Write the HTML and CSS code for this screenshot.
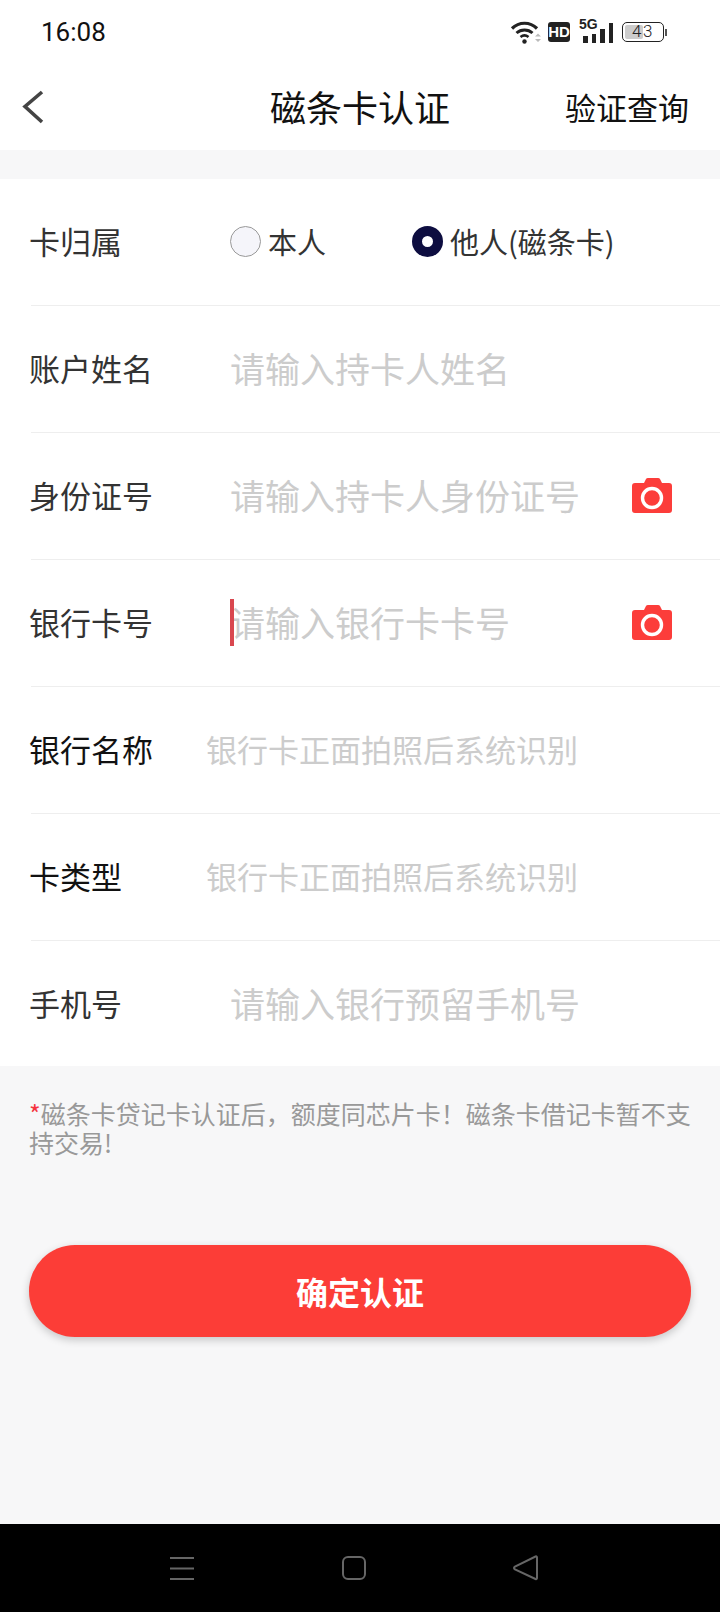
FILE: index.html
```html
<!DOCTYPE html>
<html lang="zh-CN">
<head>
  <meta charset="UTF-8">
  <title>磁条卡认证</title>
  <link rel="stylesheet" href="styles.css">
</head>
<body>
  <!-- Status bar -->
  <div class="status-bar">
    <span class="time">16:08</span>
    <div class="status-icons">
      <svg class="wifi" width="31" height="24" viewBox="0 0 31 24">
        <path d="M2 8.500C9 1.500 20 1.500 27 8.500" fill="none" stroke="#222" stroke-width="3.200"/>
        <path d="M6.500 13C11 9 18 9 22.500 13" fill="none" stroke="#222" stroke-width="3"/>
        <path d="M10.500 17C13 15 16 15 18.500 17" fill="none" stroke="#222" stroke-width="2.600"/>
        <circle cx="14.500" cy="21.500" r="2.200" fill="#222"/>
        <path d="M25 16.500h6l-3-3zM25 19h6l-3 3z" fill="#bbb"/>
      </svg>
      <span class="hd">HD</span>
      <div class="signal">
        <span class="five-g">5G</span>
        <div class="bars">
          <i class="bar bar-1"></i>
          <i class="bar bar-2"></i>
          <i class="bar bar-3"></i>
          <i class="bar bar-4"></i>
        </div>
      </div>
      <div class="battery">
        <div class="battery-body">
          <div class="battery-fill"></div>
          <span class="battery-num">43</span>
        </div>
        <div class="battery-nub"></div>
      </div>
    </div>
  </div>

  <!-- Title bar -->
  <div class="nav-bar">
    <svg class="back" width="24" height="36" viewBox="0 0 24 36">
      <path d="M20 3L3 17.500L20 33" fill="none" stroke="#444" stroke-width="3.600"/>
    </svg>
    <h1 class="nav-title">磁条卡认证</h1>
    <span class="nav-action">验证查询</span>
  </div>

  <div class="page">
    <div class="form">
      <div class="row">
        <label class="row-label">卡归属</label>
        <div class="radios">
          <div class="radio-item radio-self">
            <span class="radio"></span>
            <span>本人</span>
          </div>
          <div class="radio-item">
            <span class="radio radio-on"></span>
            <span>他人(磁条卡)</span>
          </div>
        </div>
      </div>
      <div class="row">
        <label class="row-label">账户姓名</label>
        <span class="placeholder">请输入持卡人姓名</span>
      </div>
      <div class="row">
        <label class="row-label">身份证号</label>
        <span class="placeholder">请输入持卡人身份证号</span>
        <svg class="camera" width="40" height="35" viewBox="0 0 40 35">
          <path d="M3 5h9l2-4q.5-1 2-1h10q1.500 0 2 1l2 4h7q3 0 3 3v24q0 3-3 3H3q-3 0-3-3V8q0-3 3-3z" fill="#fc3d3a"/>
          <circle cx="20" cy="20" r="9.500" fill="none" stroke="#fff" stroke-width="3.400"/>
        </svg>
      </div>
      <div class="row">
        <label class="row-label">银行卡号</label>
        <span class="caret"></span>
        <span class="placeholder">请输入银行卡卡号</span>
        <svg class="camera" width="40" height="35" viewBox="0 0 40 35">
          <path d="M3 5h9l2-4q.5-1 2-1h10q1.500 0 2 1l2 4h7q3 0 3 3v24q0 3-3 3H3q-3 0-3-3V8q0-3 3-3z" fill="#fc3d3a"/>
          <circle cx="20" cy="20" r="9.500" fill="none" stroke="#fff" stroke-width="3.400"/>
        </svg>
      </div>
      <div class="row">
        <label class="row-label row-label-dark row-label-short">银行名称</label>
        <span class="hint">银行卡正面拍照后系统识别</span>
      </div>
      <div class="row">
        <label class="row-label row-label-dark row-label-short">卡类型</label>
        <span class="hint">银行卡正面拍照后系统识别</span>
      </div>
      <div class="row">
        <label class="row-label">手机号</label>
        <span class="placeholder">请输入银行预留手机号</span>
      </div>
    </div>

    <p class="note"><span class="star">*</span>磁条卡贷记卡认证后，额度同芯片卡！磁条卡借记卡暂不支持交易!</p>

    <button class="submit" type="button">确定认证</button>
  </div>

  <!-- System navigation -->
  <div class="sys-nav">
    <svg width="26" height="24" viewBox="0 0 26 24">
      <path d="M1 2h24M1 12.500h24M1 23h24" stroke="#666" stroke-width="2"/>
    </svg>
    <svg width="26" height="26" viewBox="0 0 26 26">
      <rect x="2" y="2" width="22" height="22" rx="5" fill="none" stroke="#666" stroke-width="2"/>
    </svg>
    <svg width="26" height="26" viewBox="0 0 26 26">
      <path d="M24 2.500V23q0 1.500-1.500 1L2 14.500q-2-1.500 0-3L22.500 1.500q1.500-.5 1.500 1z" fill="none" stroke="#666" stroke-width="2"/>
    </svg>
  </div>
</body>
</html>
```

FILE: styles.css
```css
* {
  box-sizing: border-box;
}

html, body {
  height: 100%;
}

body {
  margin: 0;
  display: flex;
  flex-direction: column;
  background: #f7f7f8;
  font-family: "Noto Sans CJK SC", "Noto Sans", sans-serif;
  color: #333;
}

.status-bar {
  height: 64px;
  background: #fff;
  display: flex;
  align-items: center;
  justify-content: space-between;
  padding: 0 53px 0 41px;
}

.time {
  font-family: Roboto, sans-serif;
  font-size: 26px;
  color: #111;
}

.status-icons {
  display: flex;
  align-items: center;
}

.wifi {
  margin-right: 7px;
  overflow: visible;
}

.hd {
  width: 22px;
  height: 20px;
  border-radius: 3px;
  background: #222;
  color: #fff;
  font-family: "Liberation Sans Narrow", "Liberation Sans", sans-serif;
  font-size: 15px;
  font-weight: bold;
  line-height: 20px;
  text-align: center;
  margin-right: 11px;
}

.signal {
  position: relative;
  width: 32px;
  height: 22px;
  margin-right: 9px;
  display: flex;
  align-items: flex-end;
  justify-content: flex-end;
}

.five-g {
  position: absolute;
  left: -2px;
  top: -4px;
  font-family: "Liberation Sans Narrow", "Liberation Sans", sans-serif;
  font-size: 14px;
  font-weight: bold;
  line-height: 14px;
  color: #222;
}

.bars {
  display: flex;
  align-items: flex-end;
  gap: 4px;
}

.bar {
  display: block;
  width: 4.500px;
  background: #222;
}

.bar-1 { height: 7px; }
.bar-2 { height: 9px; }
.bar-3 { height: 14px; }
.bar-4 { height: 20px; }

.battery {
  display: flex;
  align-items: center;
}

.battery-body {
  position: relative;
  width: 42px;
  height: 20px;
  border: 1.500px solid #222;
  border-radius: 5px;
  padding: 2px;
}

.battery-fill {
  width: 50%;
  height: 100%;
  background: #ccc;
  border-radius: 2px;
}

.battery-num {
  position: absolute;
  inset: 0;
  text-align: center;
  font-family: Roboto, sans-serif;
  font-size: 17px;
  font-weight: 300;
  line-height: 17px;
  letter-spacing: 1.500px;
  color: #222;
}

.battery-nub {
  width: 2px;
  height: 7px;
  margin-left: 1px;
  background: #555;
}

.nav-bar {
  height: 86px;
  background: #fff;
  display: flex;
  align-items: center;
  justify-content: space-between;
  padding: 0 31px 0 22px;
  position: relative;
}

.nav-title {
  position: absolute;
  left: 0;
  right: 0;
  margin: 0 0 2px;
  text-align: center;
  font-size: 36px;
  font-weight: normal;
  color: #111;
}

.nav-action {
  position: relative;
  margin-bottom: 2px;
  font-size: 31px;
  color: #111;
}

.page {
  flex: 1;
  padding-top: 29px;
}

.form {
  background: #fff;
  padding-left: 31px;
}

.row {
  height: 127px;
  display: flex;
  align-items: center;
  border-bottom: 1px solid #eee;
  padding: 0 48px 3px 0;
}

.row:last-child {
  height: 125px;
  border-bottom: none;
}

.row-label {
  width: 201px;
  margin-left: -2px;
  flex-shrink: 0;
  font-size: 31px;
  color: #333;
}

.row-label-dark {
  color: #111;
}

.row-label-short {
  width: 177px;
}

.radios {
  display: flex;
  font-size: 29px;
}

.radio-item {
  display: flex;
  align-items: center;
  gap: 7px;
}

.radio-self {
  width: 182px;
}

.radio {
  width: 31px;
  height: 31px;
  margin-top: 2px;
  border-radius: 50%;
  background: #f5f5fa;
  border: 1px solid #999;
}

.radio-on {
  background: #fff;
  border: 10px solid #0d0d40;
}

.placeholder {
  flex: 1;
  font-size: 35px;
  color: #ccc;
}

.hint {
  font-size: 31px;
  color: #ccc;
}

.camera {
  margin-top: 2px;
}

.caret {
  width: 4px;
  height: 47px;
  margin: 2px -4px 0 0;
  background: #d9474f;
  position: relative;
  z-index: 1;
}

.note {
  margin: 0;
  padding: 33px 29px 0;
  font-size: 25px;
  line-height: 29px;
  color: #999;
}

.star {
  color: #f5333f;
}

.submit {
  display: block;
  width: 662px;
  height: 92px;
  margin: 88px 0 0 29px;
  border: none;
  border-radius: 46px;
  background: #fc3d37;
  box-shadow: 0 3px 8px rgba(0,0,0,0.2);
  color: #fff;
  font-family: inherit;
  font-size: 32px;
  font-weight: bold;
}

.sys-nav {
  height: 88px;
  background: #000;
  display: flex;
  align-items: center;
  justify-content: space-between;
  padding: 0 181px 0 169px;
}
```
